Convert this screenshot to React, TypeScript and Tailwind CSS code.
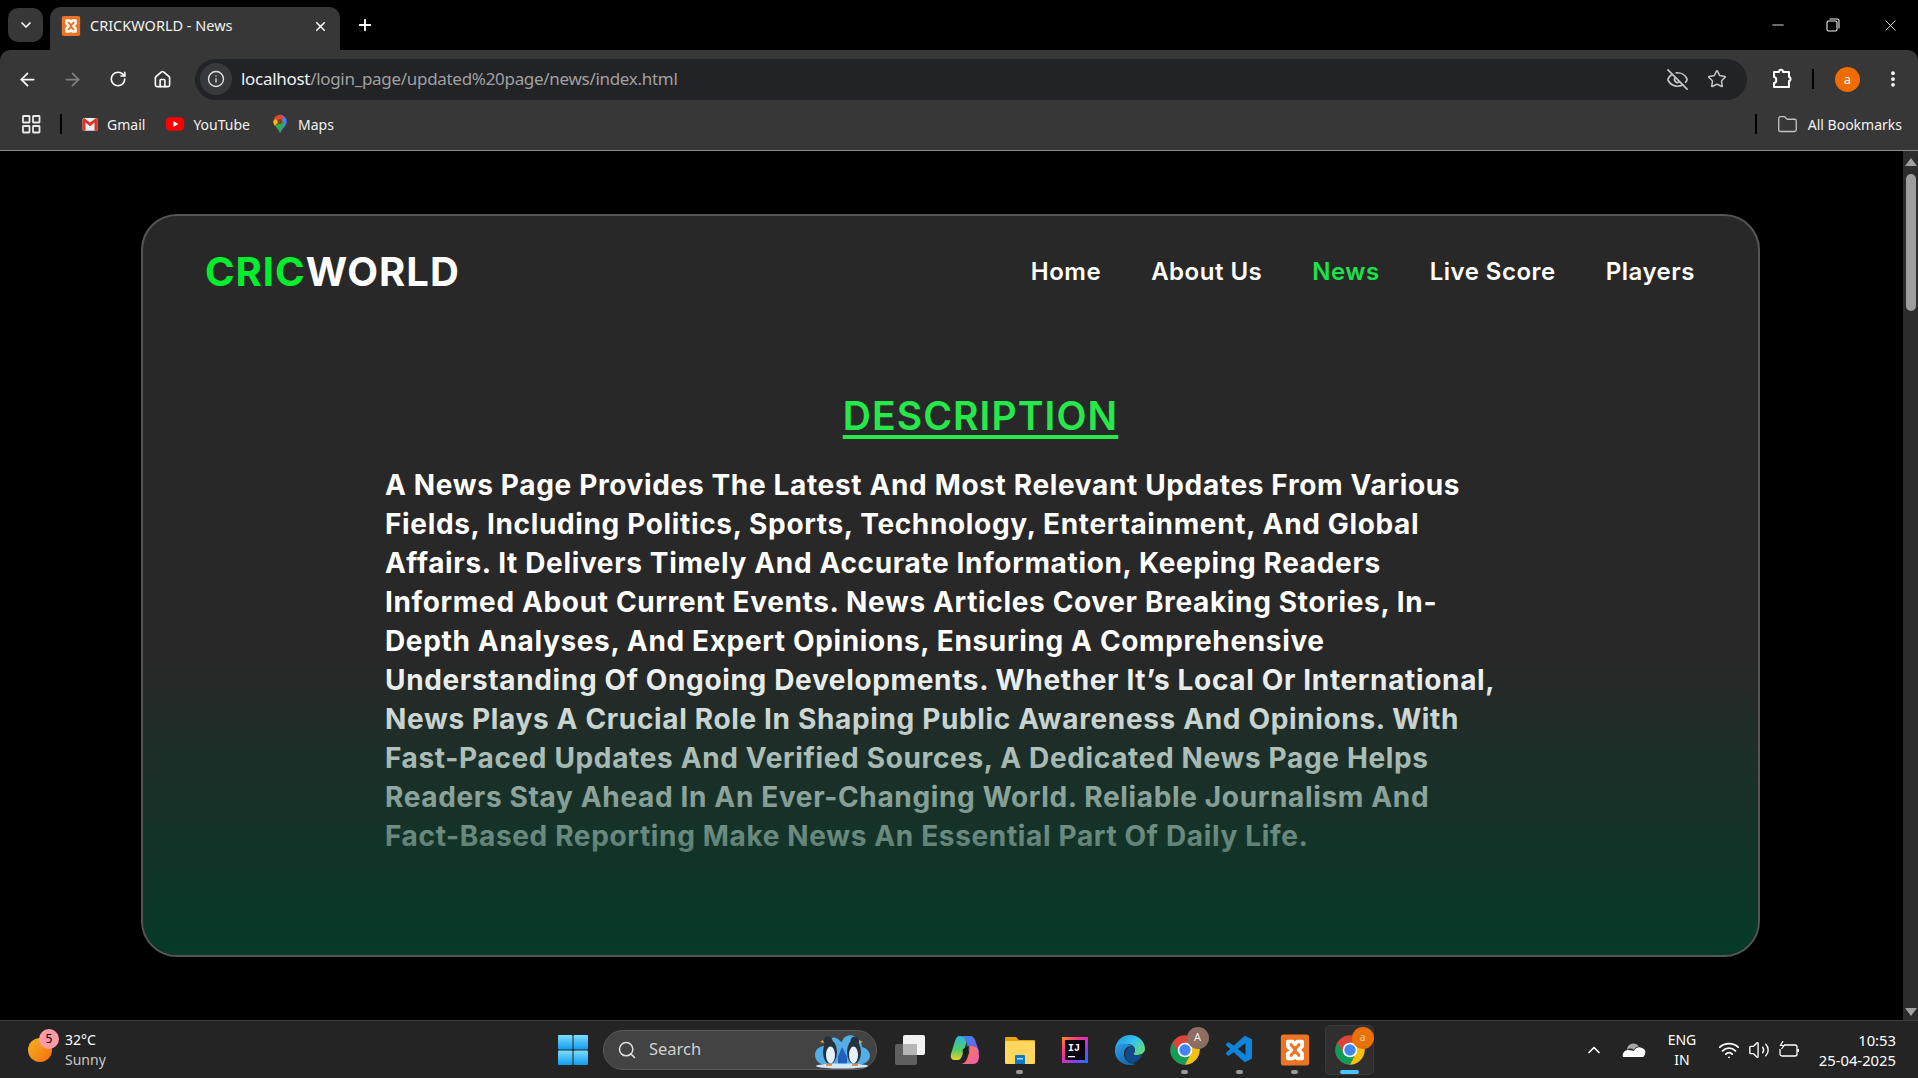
import {
  ArrowLeft,
  ArrowRight,
  ChevronDown,
  ChevronUp,
  EyeOff,
  Folder,
  Home,
  Info,
  Minus,
  MoreVertical,
  Plus,
  RotateCw,
  Search,
  Star,
  Volume2,
  Wifi,
  X,
} from "lucide-react"
import { VscVscode } from "react-icons/vsc"

const ui = "font-['Noto_Sans','Open_Sans',sans-serif]"

const navLinks = ["Home", "About Us", "News", "Live Score", "Players"]

const descriptionLines = [
  "A News Page Provides The Latest And Most Relevant Updates From Various",
  "Fields, Including Politics, Sports, Technology, Entertainment, And Global",
  "Affairs. It Delivers Timely And Accurate Information, Keeping Readers",
  "Informed About Current Events. News Articles Cover Breaking Stories, In-",
  "Depth Analyses, And Expert Opinions, Ensuring A Comprehensive",
  "Understanding Of Ongoing Developments. Whether It’s Local Or International,",
  "News Plays A Crucial Role In Shaping Public Awareness And Opinions. With",
  "Fast-Paced Updates And Verified Sources, A Dedicated News Page Helps",
  "Readers Stay Ahead In An Ever-Changing World. Reliable Journalism And",
  "Fact-Based Reporting Make News An Essential Part Of Daily Life.",
]

function XamppIcon({ size }: { size: number }) {
  return (
    <svg width={size} height={size} viewBox="0 0 24 24">
      <rect x="2" y="1" width="20" height="22" rx="2" fill="#ec7424" />
      <path d="M7 6h3.500L12 8l1.500-2H17v3.500L14.500 12l2.500 2.500V18h-3.500L12 16l-1.500 2H7v-3.500L9.500 12 7 9.500z" fill="none" stroke="#fff" strokeWidth="2.600" strokeLinejoin="round" />
    </svg>
  )
}

function GmailIcon() {
  return (
    <svg width="18" height="18" viewBox="0 0 24 24">
      <rect x="2" y="4" width="20" height="17" rx="2" fill="#eee" />
      <path d="M2 6v15h4V10l6 5 6-5v11h4V6l-2-2-8 6-8-6z" fill="#d9352c" />
    </svg>
  )
}

function YoutubeIcon() {
  return (
    <svg width="20" height="20" viewBox="0 0 24 24">
      <rect x="1" y="4" width="22" height="16" rx="5" fill="#f00" />
      <path d="M10 8.500 16 12l-6 3.500z" fill="#fff" />
    </svg>
  )
}

function MapsIcon({ size = 20 }: { size?: number }) {
  return (
    <svg width={size} height={size} viewBox="0 0 24 24">
      <path d="M12 1a8 8 0 0 1 8 8c0 5-5 8-8 14z" fill="#4285f4" />
      <path d="M12 1a8 8 0 0 0-8 8c0 2 1 4 2 5L17 4a8 8 0 0 0-5-3z" fill="#ea4335" />
      <path d="M6 14c2 3 5 5 6 9 1-4 3-6 5-8l-2-6z" fill="#34a853" />
      <path d="M4 9c0 2 1 4 2 5l4-4-3-4a8 8 0 0 0-3 3z" fill="#fbbc04" />
      <circle cx="12" cy="9" r="3" fill="#7a4a12" />
    </svg>
  )
}

function ChromeIcon() {
  return (
    <svg width="32" height="32" viewBox="0 0 48 48">
      <circle cx="24" cy="24" r="22" fill="#db4437" />
      <path d="M4.950 13A22 22 0 0 0 24 46l9-17H15z" fill="#0f9d58" />
      <path d="M24 13h19.050A22 22 0 0 1 24 46l9-17z" fill="#f4c20d" />
      <circle cx="24" cy="24" r="11" fill="#fff" />
      <circle cx="24" cy="24" r="8.500" fill="#4285f4" />
    </svg>
  )
}

function WindowsIcon() {
  return (
    <svg width="32" height="32" viewBox="0 0 32 32">
      <defs>
        <linearGradient id="winLogo" x1="0" y1="0" x2="0" y2="1">
          <stop offset="0" stopColor="#7fdcfb" />
          <stop offset="1" stopColor="#0f9cf0" />
        </linearGradient>
      </defs>
      <rect x="1" y="1" width="14.500" height="14.500" rx="1" fill="url(#winLogo)" />
      <rect x="16.500" y="1" width="14.500" height="14.500" rx="1" fill="url(#winLogo)" />
      <rect x="1" y="16.500" width="14.500" height="14.500" rx="1" fill="url(#winLogo)" />
      <rect x="16.500" y="16.500" width="14.500" height="14.500" rx="1" fill="url(#winLogo)" />
    </svg>
  )
}

function TaskViewIcon() {
  return (
    <svg width="32" height="32" viewBox="0 0 32 32">
      <rect x="1" y="10" width="22" height="21" rx="2" fill="#5f5f5f" />
      <rect x="9" y="1" width="22" height="20" rx="2" fill="#f2f2f2" />
      <rect x="9" y="10" width="14" height="11" rx="1" fill="#b5b5b5" />
    </svg>
  )
}

function CopilotIcon() {
  return (
    <svg width="32" height="32" viewBox="0 0 32 32">
      <defs>
        <linearGradient id="copA" x1="0" y1="0" x2="1" y2="1">
          <stop offset="0" stopColor="#2f8ff0" />
          <stop offset="1" stopColor="#8a4fe0" />
        </linearGradient>
        <linearGradient id="copB" x1="0" y1="0" x2="1" y2="1">
          <stop offset="0" stopColor="#f7863a" />
          <stop offset="1" stopColor="#ef5ab0" />
        </linearGradient>
        <linearGradient id="copC" x1="0" y1="0" x2="0" y2="1">
          <stop offset="0" stopColor="#2fb6e0" />
          <stop offset="0.6" stopColor="#55d060" />
          <stop offset="1" stopColor="#f0d030" />
        </linearGradient>
      </defs>
      <path d="M11 2h10c3 0 4 2 5 4l4 11c1 3-2 4-4 3l-6-2-3-11c-1-3-3-5-6-5z" fill="url(#copA)" />
      <path d="M11 2C8 2 7 4 6 7L2 20c-1 4 1 6 4 6h3c2 0 3-2 4-4l4-12c1-4-2-8-6-8z" fill="url(#copC)" />
      <path d="M21 12c3 0 7 1 8 4l1 6c0 5-2 8-6 8H11c3 0 6-2 7-5l3-9c0-2 0-3 0-4z" fill="url(#copB)" />
      <path d="M14 15c-1 3 0 6 3 6 1 0 1-1 2-3l1-6z" fill="#1c1c1c" />
    </svg>
  )
}

function ExplorerIcon() {
  return (
    <svg width="32" height="32" viewBox="0 0 32 32">
      <path d="M1 4a1 1 0 0 1 1-1h10l3 3h15a1 1 0 0 1 1 1v4H1z" fill="#e5a50a" />
      <rect x="1" y="7" width="30" height="23" rx="1" fill="#ffd75e" />
      <path d="M11 22a1 1 0 0 1 1-1h8a1 1 0 0 1 1 1v8H11z" fill="#0f78c8" />
      <rect x="13" y="24" width="6" height="1.500" fill="#9fdcff" />
    </svg>
  )
}

function IntellijIcon() {
  return (
    <svg width="28" height="28" viewBox="0 0 28 28">
      <defs>
        <linearGradient id="ijBorder" x1="0" y1="0" x2="1" y2="1">
          <stop offset="0" stopColor="#ff8a2a" />
          <stop offset="0.35" stopColor="#ff318c" />
          <stop offset="0.7" stopColor="#8a3df5" />
          <stop offset="1" stopColor="#087cfa" />
        </linearGradient>
      </defs>
      <rect x="1" y="1" width="26" height="26" fill="url(#ijBorder)" />
      <rect x="4" y="4" width="20" height="20" fill="#0a0410" />
      <text x="7" y="15" fontSize="10" fontWeight="700" fill="#fff" fontFamily="Liberation Mono, monospace">IJ</text>
      <rect x="7" y="20" width="7" height="1.300" fill="#fff" />
    </svg>
  )
}

function EdgeIcon() {
  return (
    <svg width="32" height="32" viewBox="0 0 32 32">
      <defs>
        <linearGradient id="edgeTop" x1="0" y1="0" x2="1" y2="0.7">
          <stop offset="0" stopColor="#1a8fdc" />
          <stop offset="0.55" stopColor="#35c1f1" />
          <stop offset="1" stopColor="#5fdc7c" />
        </linearGradient>
        <linearGradient id="edgeLow" x1="0" y1="0" x2="1" y2="1">
          <stop offset="0" stopColor="#2f9ee8" />
          <stop offset="1" stopColor="#0c59a4" />
        </linearGradient>
      </defs>
      <path d="M1 15C2 7 8 1 16 1c8 0 15 6 15 14 0 3-3 6-8 6-2 0-3 0-4-1 1-1 2-2 2-4 0-3-3-6-7-6-6 0-11 2-13 5z" fill="url(#edgeTop)" />
      <path d="M1 15c2-4 7-6 12-5 2 0 4 1 5 2-5 0-8 3-8 8 0 6 5 10 12 10-2 1-4 1-6 1C7 31 0 24 1 15z" fill="url(#edgeLow)" />
      <path d="M11 20c0-4 3-7 7-8 2 1 3 2 3 4 0 2-1 3-2 4 1 1 2 1 4 1 2 0 4 0 6-2-2 5-5 8-9 10l-2 0c-4-1-7-5-7-9z" fill="#114a8b" />
    </svg>
  )
}

function PenguinArt() {
  return (
    <svg width="62" height="38" viewBox="0 0 62 38">
      <path d="M4 24c0-7 6-9 10-9 2-7 8-11 13-7 2 2 3 3 4 3 1-5 7-8 12-6 6 2 8 7 8 11 5 1 8 5 8 9 0 5-6 9-14 9H16C9 34 4 30 4 24z" fill="#53aee6" />
      <path d="M27 26 31 16l5 10v8H27z" fill="#1f5fc0" />
      <ellipse cx="19" cy="21" rx="7" ry="12" fill="#26323e" />
      <ellipse cx="19.500" cy="24" rx="4.500" ry="8.500" fill="#e6f0f6" />
      <circle cx="17" cy="10" r="4.500" fill="#26323e" />
      <path d="M12 9 9 11l4 1z" fill="#e8a13a" />
      <ellipse cx="43" cy="21" rx="7" ry="12" fill="#26323e" />
      <ellipse cx="42.500" cy="24" rx="4.500" ry="8.500" fill="#e6f0f6" />
      <circle cx="44" cy="10" r="4.500" fill="#26323e" />
      <path d="M48 9l4 2-4 1z" fill="#e8a13a" />
      <ellipse cx="31" cy="35" rx="26" ry="2.600" fill="#cfeafa" />
      <rect x="15" y="33" width="6" height="1.800" fill="#e8843a" />
      <rect x="41" y="33" width="6" height="1.800" fill="#e8843a" />
    </svg>
  )
}

function OneDriveIcon() {
  return (
    <svg width="24" height="16" viewBox="0 0 24 16">
      <path d="M5 8a6.500 6.500 0 0 1 12-3.500 5 5 0 0 0-5 3.500 5 5 0 0 0-7 0z" fill="#a8a8a8" />
      <path d="M1 15c-1-3 1-7 5-7 3 0 5 1 6 1 1-3 5-5 8-3 3 1 4 3 3 6-1 3-2 3-3 3H3z" fill="#fff" />
    </svg>
  )
}

function BatteryIcon() {
  return (
    <svg width="22" height="18" viewBox="0 0 22 18" fill="none" stroke="#fff" strokeWidth="1.300">
      <path d="M6 4H17a2 2 0 0 1 2 2v7a2 2 0 0 1-2 2H4a2 2 0 0 1-2-2V8" />
      <rect x="19.500" y="8" width="1.500" height="3" fill="#fff" stroke="none" />
      <path d="M5 0 2.500 4.500H6L3.500 8" strokeWidth="1.200" />
    </svg>
  )
}

function BrowserChrome() {
  return (
    <div className={`${ui} shrink-0 bg-black text-white`}>
      {/* tab strip */}
      <div className="flex h-[50px] items-end">
        <div className="mb-[8px] ml-[8px] flex h-[34px] w-[35px] items-center justify-center rounded-[10px] bg-[#373737]">
          <ChevronDown size={16} strokeWidth={2.500} />
        </div>
        <div className="ml-[7px] flex h-[43px] w-[290px] items-center rounded-t-[11px] bg-[#373737] pb-[5px] pl-[10px]">
          <XamppIcon size={22} />
          <span className="ml-[8px] text-[14.500px] text-[#f2f2f2]">CRICKWORLD - News</span>
          <X size={15} strokeWidth={2.500} className="ml-auto mr-[12px]" />
        </div>
        <div className="mb-[8px] ml-[16px] flex h-[34px] items-center">
          <Plus size={18} strokeWidth={2.500} />
        </div>
        <div className="mb-[10px] ml-auto flex h-[30px] items-center pr-[18px] text-[#f0f0f0]">
          <Minus size={18} strokeWidth={1.200} />
          <svg className="ml-[39px]" width="14" height="14" viewBox="0 0 14 14" fill="none" stroke="#f0f0f0" strokeWidth="1.100">
            <rect x="1" y="3" width="10" height="10" rx="1.500" />
            <path d="M3.500 1h8a1.500 1.500 0 0 1 1.500 1.500v8" />
          </svg>
          <X size={19} strokeWidth={1.100} className="ml-[41px]" />
        </div>
      </div>

      {/* toolbar */}
      <div className="flex h-[54px] items-center rounded-t-[10px] bg-[#373737] pl-[5px] pt-[4px]">
        <div className="flex w-[45px] justify-center"><ArrowLeft size={21} strokeWidth={2} /></div>
        <div className="flex w-[45px] justify-center text-[#808080]"><ArrowRight size={21} strokeWidth={2} /></div>
        <div className="flex w-[45px] justify-center"><RotateCw size={18} strokeWidth={2.200} /></div>
        <div className="flex w-[45px] justify-center"><Home size={19} strokeWidth={2} /></div>
        <div className="ml-[10px] flex h-[41px] w-[1552px] items-center rounded-full bg-[#222327] pl-[5px] pr-[20px]">
          <div className="flex h-[32px] w-[32px] items-center justify-center rounded-full bg-[#38393c]">
            <Info size={18} strokeWidth={1.800} className="text-[#e2e2e2]" />
          </div>
          <span className="ml-[9px] text-[17px] tracking-[-0.3px] text-[#f0f0f0]">
            localhost<span className="text-[#a0a0a0]">/login_page/updated%20page/news/index.html</span>
          </span>
          <EyeOff size={23} strokeWidth={1.800} className="ml-auto text-[#c4c4c4]" />
          <Star size={20} strokeWidth={1.800} className="ml-[18px] text-[#c4c4c4]" />
        </div>
        <div className="ml-[12px] flex w-[45px] justify-center">
          <svg width="22" height="22" viewBox="0 0 22 22" fill="none" stroke="#fff" strokeWidth="2" strokeLinejoin="round">
            <path d="M3 4h5c0-3 4-3 4 0h6v5c2 0 2 4 0 4v6H3v-4c3 0 3-6 0-6z" />
          </svg>
        </div>
        <div className="ml-[8px] h-[20px] w-[2px] bg-black" />
        <div className="ml-[21px] flex h-[25px] w-[25px] items-center justify-center rounded-full bg-[#ee6c00] text-[13px] leading-none text-white">a</div>
        <MoreVertical size={20} strokeWidth={2.500} className="ml-[23px]" />
      </div>

      {/* bookmarks bar */}
      <div className="flex h-[47px] items-center border-b border-[#8a8a8a] bg-[#373737] pb-[6px] pl-[22px] pr-[16px] text-[14px] text-[#f2f2f2]">
        <svg width="19" height="19" viewBox="0 0 19 19" fill="none" stroke="#e8e8e8" strokeWidth="1.800">
          <rect x="1" y="1" width="6.500" height="6.500" rx="0.500" />
          <rect x="11" y="1" width="6.500" height="6.500" rx="0.500" />
          <rect x="1" y="11" width="6.500" height="6.500" rx="0.500" />
          <rect x="11" y="11" width="6.500" height="6.500" rx="0.500" />
        </svg>
        <div className="ml-[19px] h-[20px] w-[2px] bg-black" />
        <div className="ml-[19px] flex items-center gap-[8px]"><GmailIcon /><span>Gmail</span></div>
        <div className="ml-[20px] flex items-center gap-[8px]"><YoutubeIcon /><span>YouTube</span></div>
        <div className="ml-[20px] flex items-center gap-[8px]"><MapsIcon /><span>Maps</span></div>
        <div className="ml-auto h-[20px] w-[2px] bg-black" />
        <Folder size={21} strokeWidth={1.500} className="ml-[20px] text-[#c4c4c4]" />
        <span className="ml-[10px]">All Bookmarks</span>
      </div>
    </div>
  )
}

function Card() {
  return (
    <div className="relative ml-[141px] mt-[63px] h-[743px] w-[1619px] overflow-hidden rounded-[36px] border-2 border-[#555555] bg-[#282828] text-white font-['Inter',sans-serif]">
      <nav className="flex items-center justify-between pl-[62px] pr-[63px] pt-[26px]">
        <div className="text-[40px] font-bold leading-[60px] tracking-[1px]">
          <span className="text-[#00ee2e]">CRIC</span>WORLD
        </div>
        <div className="flex gap-[50px]">
          {navLinks.map((link) => (
            <a key={link} className={`text-[24px] font-semibold tracking-[0.5px] ${link === "News" ? "text-[#1ee04a]" : "text-white"}`}>
              {link}
            </a>
          ))}
        </div>
      </nav>

      <h1 className="mt-[84px] pl-[60px] text-center text-[39px] font-semibold leading-[60px] tracking-[1.1px] text-[#25e84b] underline decoration-[3.500px] underline-offset-[5px]">
        DESCRIPTION
      </h1>

      <div className="ml-[242px] mt-[20px] text-[28px] font-bold leading-[39px] tracking-[0.65px]">
        {descriptionLines.map((line) => (
          <div key={line} className="whitespace-nowrap">{line}</div>
        ))}
      </div>

      {/* fades the lower part of the card and text into green */}
      <div className="pointer-events-none absolute inset-x-0 bottom-0 h-[300px] bg-gradient-to-b from-transparent to-[#063a28]" />
    </div>
  )
}

function Scrollbar() {
  return (
    <div className="flex w-[15px] shrink-0 flex-col items-center bg-[#2c2c2c]">
      <div className="mt-[7px] h-0 w-0 border-x-[6px] border-b-[8px] border-x-transparent border-b-[#a0a0a0]" />
      <div className="mt-[8px] h-[137px] w-[10px] rounded-full bg-[#9e9e9e]" />
      <div className="mb-[4px] mt-auto h-0 w-0 border-x-[6px] border-t-[8px] border-x-transparent border-t-[#a0a0a0]" />
    </div>
  )
}

function TaskIcon({ children, dot, active }: { children: React.ReactNode; dot?: boolean; active?: boolean }) {
  return (
    <div className="relative flex h-[50px] w-[55px] shrink-0 items-center justify-center">
      {active && <div className="absolute inset-x-[3px] inset-y-0 rounded-[5px] border border-[#3a3a3a] bg-[#2f2f2f]" />}
      <div className="relative flex">{children}</div>
      {dot && <div className="absolute bottom-[1px] left-[24px] h-[4px] w-[7px] rounded-full bg-[#9a9a9a]" />}
      {active && <div className="absolute bottom-[1px] left-[18px] h-[4px] w-[19px] rounded-full bg-[#4cc2ff]" />}
    </div>
  )
}

function Taskbar() {
  return (
    <div className={`${ui} flex h-[58px] shrink-0 items-center border-t border-[#3d3d3d] bg-[#242424] text-white`}>
      {/* weather */}
      <div className="flex w-[545px] shrink-0 items-center pl-[28px]">
        <div className="relative h-[24px] w-[24px] rounded-full bg-gradient-to-br from-[#eeb322] to-[#f96a0c]">
          <div className="absolute left-[11px] top-[-9px] flex h-[20px] w-[20px] items-center justify-center rounded-full bg-[#ff9aa6] text-[12px] text-black">5</div>
        </div>
        <div className="ml-[13px] text-[14px] leading-[20px]">
          <div>32°C</div>
          <div className="text-[#c8c8c8]">Sunny</div>
        </div>
      </div>

      <TaskIcon><WindowsIcon /></TaskIcon>
      <div className="ml-[3px] flex h-[40px] w-[274px] shrink-0 items-center rounded-full border border-[#5a5a5a] bg-[#434343] pl-[13px] pr-[3px]">
        <Search size={20} strokeWidth={1.800} className="text-[#e0e0e0]" />
        <span className="ml-[12px] text-[16.500px] text-[#d0d0d0]">Search</span>
        <div className="ml-auto flex"><PenguinArt /></div>
      </div>
      <div className="ml-[5px] flex">
        <TaskIcon><TaskViewIcon /></TaskIcon>
        <TaskIcon><CopilotIcon /></TaskIcon>
        <TaskIcon dot><ExplorerIcon /></TaskIcon>
        <TaskIcon><IntellijIcon /></TaskIcon>
        <TaskIcon><EdgeIcon /></TaskIcon>
        <TaskIcon dot>
          <ChromeIcon />
          <div className="absolute right-[-8px] top-[-7px] flex h-[22px] w-[22px] items-center justify-center rounded-full bg-[#8d6e63] text-[11px] text-[#eee]">A</div>
        </TaskIcon>
        <TaskIcon dot><VscVscode size={32} className="text-[#0f84dc]" /></TaskIcon>
        <TaskIcon dot><XamppIcon size={34} /></TaskIcon>
        <TaskIcon active>
          <ChromeIcon />
          <div className="absolute right-[-8px] top-[-7px] flex h-[22px] w-[22px] items-center justify-center rounded-full bg-[#e8710a] text-[11px] text-[#f3c9a5]">a</div>
        </TaskIcon>
      </div>

      {/* tray */}
      <ChevronUp size={20} strokeWidth={2} className="ml-[207px] shrink-0" />
      <div className="ml-[18px] flex w-[24px] shrink-0"><OneDriveIcon /></div>
      <div className="ml-[16px] w-[40px] shrink-0 text-center text-[14px] leading-[20px]">
        <div>ENG</div>
        <div>IN</div>
      </div>
      <Wifi size={22} strokeWidth={2} className="ml-[16px] shrink-0" />
      <Volume2 size={22} strokeWidth={1.500} className="ml-[8px] shrink-0" />
      <div className="ml-[8px] flex shrink-0"><BatteryIcon /></div>
      <div className="ml-auto pr-[22px] text-right text-[14.800px] leading-[20px]">
        <div>10:53</div>
        <div>25-04-2025</div>
      </div>
    </div>
  )
}

export default function App() {
  return (
    <div className="flex h-screen flex-col overflow-hidden bg-black">
      <BrowserChrome />
      <div className="flex min-h-0 flex-1">
        <div className="min-w-0 flex-1">
          <Card />
        </div>
        <Scrollbar />
      </div>
      <Taskbar />
    </div>
  )
}
